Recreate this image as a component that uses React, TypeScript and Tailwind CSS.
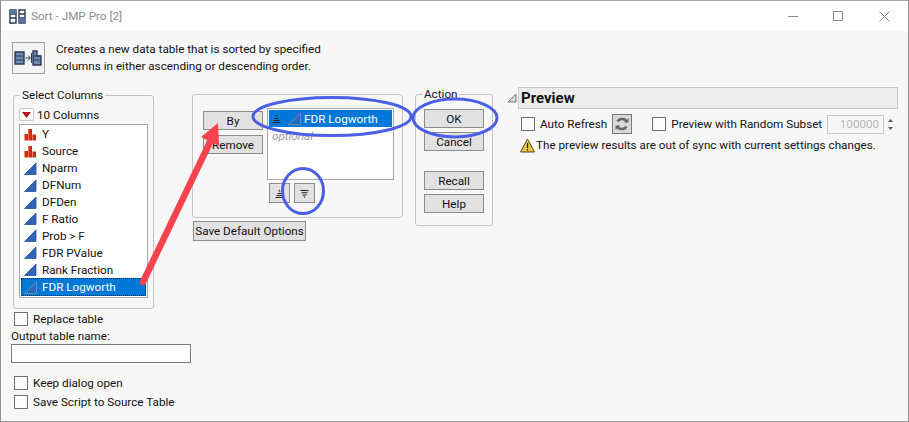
const columns = [
  { name: "Y", kind: "nominal" },
  { name: "Source", kind: "nominal" },
  { name: "Nparm", kind: "cont" },
  { name: "DFNum", kind: "cont" },
  { name: "DFDen", kind: "cont" },
  { name: "F Ratio", kind: "cont" },
  { name: "Prob > F", kind: "cont" },
  { name: "FDR PValue", kind: "cont" },
  { name: "Rank Fraction", kind: "cont" },
];

function BarsIcon() {
  return (
    <svg width="13" height="13" viewBox="0 0 13 13" className="shrink-0">
      <path d="M0.5 12.5V6H4V12.5ZM4.4 12.5V1H8V12.5ZM8.4 12.5V6.5H12V12.5Z" fill="#d12a10" />
    </svg>
  );
}

function WedgeIcon({ selected = false }: { selected?: boolean }) {
  return (
    <svg width="13" height="13" viewBox="0 0 13 13" className="shrink-0">
      {selected ? (
        <path d="M0.5 12.5L12.5 1V12.5Z" fill="#1c6fc4" stroke="#6f86ad" strokeWidth="1" />
      ) : (
        <path d="M0.5 12.5L12 1V12.5Z" fill="#2f64b8" stroke="#2a5298" strokeWidth="0.8" />
      )}
    </svg>
  );
}

function Btn({ label, className }: { label: string; className: string }) {
  return (
    <div className={`flex items-center justify-center border border-[#8c8c8c] bg-[#e1e1e1] text-[#111] ${className}`}>
      {label}
    </div>
  );
}

function Check({ label, className = "" }: { label: string; className?: string }) {
  return (
    <div className={`flex items-center ${className}`}>
      <div className="h-[14px] w-[14px] shrink-0 border border-[#707070] bg-[#fbfbfb]" />
      <span className="ml-[5px] whitespace-nowrap">{label}</span>
    </div>
  );
}

function SortGlyph({ up }: { up: boolean }) {
  return (
    <svg width="9" height="9" viewBox="0 0 9 9" className="shrink-0">
      {up ? (
        <path d="M4.5 0.5L5.5 2.5H3.5ZM2.5 4H6.5V5H2.5ZM1.5 6H7.5V7H1.5ZM0.5 8H8.5V9H0.5Z" fill="#222" />
      ) : (
        <path d="M0.5 1H8.5V2H0.5ZM1.5 3.2H7.5V4.2H1.5ZM2.5 5.4H6.5V6.4H2.5ZM3.5 7.4H5.5L4.5 9Z" fill="#222" />
      )}
    </svg>
  );
}

export default function App() {
  return (
    <div className="relative h-[422px] w-[909px] overflow-hidden border-x border-y border-x-[#8f8f8f] border-t-[#a6a6a6] border-b-[#9a9a9a] bg-[#f7f7f7] font-['Roboto','Open_Sans',sans-serif] text-[11.7px] leading-[16px] text-[#111]">
      {/* title bar */}
      <div className="flex h-[30px] items-center bg-white">
        <svg width="17" height="15" viewBox="0 0 17 15" className="ml-[8px]">
          <path d="M1 1H7V14H1ZM10 1H16V14H10Z" fill="#fff" stroke="#2b3a55" strokeWidth="1.4" />
          <path d="M1 5H7M1 9H7M10 5H16M10 9H16" stroke="#2b3a55" strokeWidth="1.4" />
          <path d="M1 1H7V5H1ZM10 9H16V14H10Z" fill="#5877a6" />
        </svg>
        <span className="ml-[5px] text-[#8c8c8c]">Sort - JMP Pro [2]</span>
        <div className="ml-auto flex items-center">
          <div className="h-px w-[10px] bg-[#8a8a8a]" />
          <div className="ml-[35px] h-[10px] w-[10px] border border-[#8a8a8a]" />
          <svg width="11" height="11" viewBox="0 0 11 11" className="ml-[36px] mr-[18px]">
            <path d="M0.5 0.5L10.5 10.5M10.5 0.5L0.5 10.5" stroke="#8a8a8a" strokeWidth="1" />
          </svg>
        </div>
      </div>

      {/* description */}
      <div className="flex h-[55px] pl-[11px] pt-[11px]">
        <div className="flex h-[32px] w-[33px] items-center justify-center border border-[#a0a0a0] bg-[#f3f3f3]">
          <svg width="29" height="17" viewBox="0 0 29 17">
            <path d="M1 2H10V14H1ZM19 1H23V6H27V15H19Z" fill="#6d8bb5" stroke="#2b3a55" strokeWidth="1.4" />
            <path d="M1 6H10M1 10H10M19 6H27M19 10H27" stroke="#2b3a55" strokeWidth="1.2" />
            <path d="M11.5 8H16M14 5.5L16.5 8L14 10.5M17.5 3V13" stroke="#2b3a55" strokeWidth="1" fill="none" />
          </svg>
        </div>
        <p className="ml-[11px] mt-[-1px] whitespace-nowrap leading-[17px]">
          Creates a new data table that is sorted by specified
          <br />
          columns in either ascending or descending order.
        </p>
      </div>

      {/* main row */}
      <div className="flex items-start pl-[10px]">
        {/* left column */}
        <div className="mt-[1px] flex w-[180px] flex-col">
          <fieldset className="ml-[2px] h-[222px] w-[141px] rounded-[3px] border border-[#c4c4c4] px-[5px] pb-[9px]">
            <legend className="ml-[1px] px-[2px]">Select Columns</legend>
            <div className="flex h-[21px] items-center pt-[2px]">
              <div className="flex h-[13px] w-[15px] items-center justify-center rounded-[2px] border border-[#c9c9c9] bg-white">
                <svg width="9" height="6" viewBox="0 0 9 6">
                  <path d="M0 0H9L4.5 6Z" fill="#b3121d" />
                </svg>
              </div>
              <span className="ml-[3px]">10 Columns</span>
            </div>
            <div className="flex h-[174px] flex-col border border-[#a8a8a8] bg-white p-[1px]">
              {columns.map((c) => (
                <div key={c.name} className="flex h-[17px] items-center pl-[3px]">
                  {c.kind === "nominal" ? <BarsIcon /> : <WedgeIcon />}
                  <span className="ml-[5px] whitespace-nowrap">{c.name}</span>
                </div>
              ))}
              <div className="flex h-[18px] items-center border border-dotted border-[#0a2a55] bg-[#0078d7] pl-[2px] text-white">
                <WedgeIcon selected />
                <span className="ml-[5px] whitespace-nowrap">FDR Logworth</span>
              </div>
            </div>
          </fieldset>
          <Check label="Replace table" className="ml-[3px] mt-[2px]" />
          <div className="mt-[2px] h-[15px] leading-[14px]">Output table name:</div>
          <div className="h-[19px] w-[180px] border border-[#7a7a7a] bg-white" />
          <Check label="Keep dialog open" className="ml-[3px] mt-[12px]" />
          <Check label="Save Script to Source Table" className="ml-[3px] mt-[3px]" />
        </div>

        {/* by panel */}
        <div className="ml-[1px] mt-[8px] flex flex-col">
          <div className="flex h-[124px] w-[211px] rounded-[3px] border border-[#c4c4c4]">
            <div className="ml-[10px] mt-[16px] flex w-[60px] flex-col gap-[5px]">
              <Btn label="By" className="h-[19px]" />
              <Btn label="Remove" className="h-[19px]" />
            </div>
            <div className="ml-[4px] mt-[13px] flex flex-col">
              <div className="h-[72px] w-[127px] border border-[#a8a8a8] bg-white p-[1px]">
                <div className="flex h-[17px] items-center bg-[#0078d7] pl-[3px] text-white">
                  <SortGlyph up />
                  <span className="ml-[7px] flex">
                    <WedgeIcon selected />
                  </span>
                  <span className="ml-[3px] whitespace-nowrap">FDR Logworth</span>
                </div>
                <div className="pl-[3px] pt-[1px] italic text-[#9a9a9a]">optional</div>
              </div>
              <div className="ml-[2px] mt-[3px] flex gap-[4px]">
                <div className="flex h-[20px] w-[21px] items-center justify-center border border-[#8c8c8c] bg-[#e1e1e1]">
                  <SortGlyph up />
                </div>
                <div className="flex h-[20px] w-[21px] items-center justify-center border border-[#8c8c8c] bg-[#e1e1e1]">
                  <SortGlyph up={false} />
                </div>
              </div>
            </div>
          </div>
          <Btn label="Save Default Options" className="ml-[1px] mt-[3px] h-[20px] w-[113px] whitespace-nowrap" />
        </div>

        {/* action */}
        <fieldset className="ml-[12px] h-[140px] w-[77px] rounded-[3px] border border-[#c4c4c4] px-[8px]">
          <legend className="ml-[-1px] px-[1px]">Action</legend>
          <div className="mt-[7px] flex flex-col">
            <Btn label="OK" className="h-[19px] w-[60px]" />
            <Btn label="Cancel" className="mt-[4px] h-[19px] w-[60px]" />
            <Btn label="Recall" className="mt-[20px] h-[19px] w-[60px]" />
            <Btn label="Help" className="mt-[4px] h-[19px] w-[60px]" />
          </div>
        </fieldset>

        {/* preview */}
        <div className="ml-[14px] mt-[1px] flex flex-col">
          <div className="flex items-center">
            <svg width="10" height="10" viewBox="0 0 10 10" className="shrink-0">
              <path d="M1 9L9 1V9Z" fill="#d5d5d5" stroke="#777" strokeWidth="1" />
            </svg>
            <div className="ml-[1px] flex h-[22px] w-[380px] items-center border border-[#c8c8c8] bg-[#ececec] pl-[2px] text-[15px] font-bold">
              Preview
            </div>
          </div>
          <div className="ml-[14px] mt-[5px] flex h-[20px] items-center">
            <Check label="Auto Refresh" />
            <div className="ml-[5px] flex h-[20px] w-[20px] items-center justify-center border border-[#777] bg-[#d9d9d9]">
              <svg width="14" height="14" viewBox="0 0 14 14" fill="none" stroke="#666" strokeWidth="2.6">
                <path d="M12 5A5.5 5.5 0 0 0 2.5 4.5M2 9A5.5 5.5 0 0 0 11.5 9.5" />
                <path d="M9 5.5H13.5V1ZM5 8.5H0.5V13Z" fill="#666" stroke="none" />
              </svg>
            </div>
            <Check label="Preview with Random Subset" className="ml-[20px]" />
            <div className="ml-[5px] flex h-[19px] w-[57px] items-center justify-end border border-[#c8c8c8] bg-[#f7f7f7] pr-[4px] text-[#b5b5b5]">
              100000
            </div>
            <div className="flex h-[19px] w-[13px] flex-col items-center justify-center gap-[5px]">
              <svg width="5" height="3" viewBox="0 0 5 3">
                <path d="M0 3L2.5 0L5 3Z" fill="#555" />
              </svg>
              <svg width="5" height="3" viewBox="0 0 5 3">
                <path d="M0 0H5L2.5 3Z" fill="#555" />
              </svg>
            </div>
          </div>
          <div className="ml-[13px] mt-[3px] flex items-center">
            <svg width="15" height="15" viewBox="0 0 15 15" className="shrink-0">
              <path d="M7.5 1L14.5 14H0.5Z" fill="#e8c547" stroke="#5a4a10" strokeWidth="1" />
              <path d="M7.5 5V10M7.5 11V12.5" stroke="#222" strokeWidth="1.2" />
            </svg>
            <span className="ml-[1px] whitespace-nowrap">The preview results are out of sync with current settings changes.</span>
          </div>
        </div>
      </div>

      {/* annotations drawn over the dialog */}
      <svg width="909" height="422" viewBox="0 0 909 422" className="pointer-events-none absolute left-[-1px] top-[-1px]">
        <g fill="none" stroke="#4a5fe6" strokeWidth="3">
          <ellipse cx="332" cy="116.5" rx="79" ry="19" />
          <ellipse cx="455" cy="118" rx="42" ry="19" />
          <ellipse cx="303" cy="191" rx="20.5" ry="22.5" />
        </g>
        <path d="M143 282L211 140" stroke="#f8434f" strokeWidth="6.5" strokeLinecap="round" />
        <path d="M218 123L201 137L219 146Z" fill="#f8434f" />
      </svg>
    </div>
  );
}
